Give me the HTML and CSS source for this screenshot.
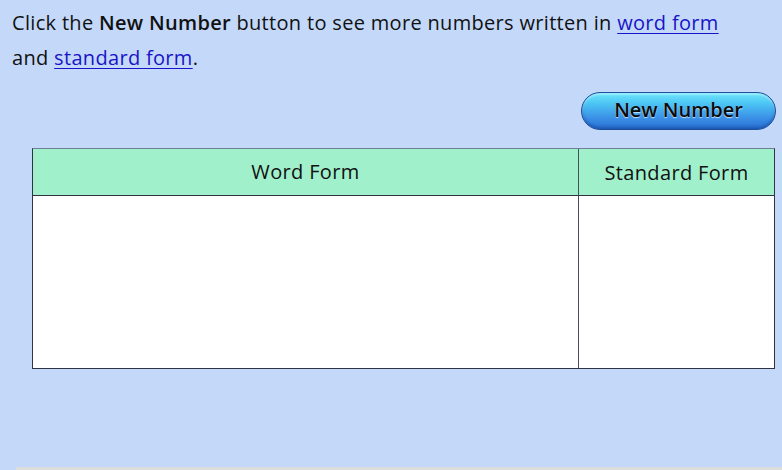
FILE: index.html
```html
<!DOCTYPE html>
<html>
<head>
<meta charset="utf-8">
<link rel="stylesheet" href="styles.css">
</head>
<body>
<div class="page">
  <p class="intro">Click the <b>New Number</b> button to see more numbers written in <a href="#">word form</a> and <a href="#">standard form</a>.</p>
  <div class="actions">
    <button class="new-btn">New Number</button>
  </div>
  <div class="table">
    <div class="cell head word">Word Form</div>
    <div class="cell head std">Standard Form</div>
    <div class="cell body word"></div>
    <div class="cell body std"></div>
  </div>
</div>
<div class="footer-strip"></div>
</body>
</html>
```
FILE: styles.css
```css
html, body {
  margin: 0;
  padding: 0;
  height: 100%;
  overflow: hidden;
}
body {
  background: #c4d9f9;
  font-family: "Open Sans", "Lato", sans-serif;
  color: #111;
  position: relative;
}
.page {
  padding: 5px 6px 0 12px;
}
.intro {
  margin: 0;
  width: 740px;
  font-size: 20px;
  line-height: 35px;
  letter-spacing: 0.32px;
}
.intro b {
  font-weight: 600;
}
.intro a {
  color: #1a14c8;
  text-decoration: underline;
  text-underline-offset: 3px;
  text-decoration-thickness: 1px;
}
.actions {
  display: flex;
  justify-content: flex-end;
  margin-top: 17px;
}
.new-btn {
  width: 195px;
  height: 38px;
  border-radius: 19px;
  border: 1px solid #1d4f9a;
  background: linear-gradient(to bottom, #6ce6fb 0%, #4cc4f4 30%, #3a8fe6 70%, #2a6fd2 100%);
  box-shadow: inset 0 2px 2px rgba(255,255,255,0.35), inset 0 -2px 3px rgba(0,40,120,0.35);
  font-family: inherit;
  font-size: 20px;
  font-weight: 600;
  color: #0b0b0b;
  text-shadow: 0 1px 1px rgba(255,255,255,0.7);
  padding: 0 0 4px 0;
  cursor: pointer;
}
.table {
  margin: 18px 0 0 20px;
  width: 743px;
  display: grid;
  grid-template-columns: 546px 1fr;
  grid-template-rows: 47px 172px;
  border: 1px solid #2e3346;
  border-top-color: #6e7f98;
  box-sizing: border-box;
}
.cell {
  box-sizing: border-box;
}
.head {
  background: #a0f0cc;
  display: flex;
  align-items: center;
  justify-content: center;
  font-size: 20px;
  letter-spacing: 0.35px;
  border-bottom: 1px solid #2e3346;
  padding-bottom: 2px;
}
.head.std {
  padding-top: 3px;
}
.word {
  border-right: 1px solid #4a4e5c;
}
.body {
  background: #ffffff;
}
.footer-strip {
  position: absolute;
  left: 16px;
  right: 0;
  bottom: 0;
  height: 3px;
  background: #dcdcdc;
}
```
